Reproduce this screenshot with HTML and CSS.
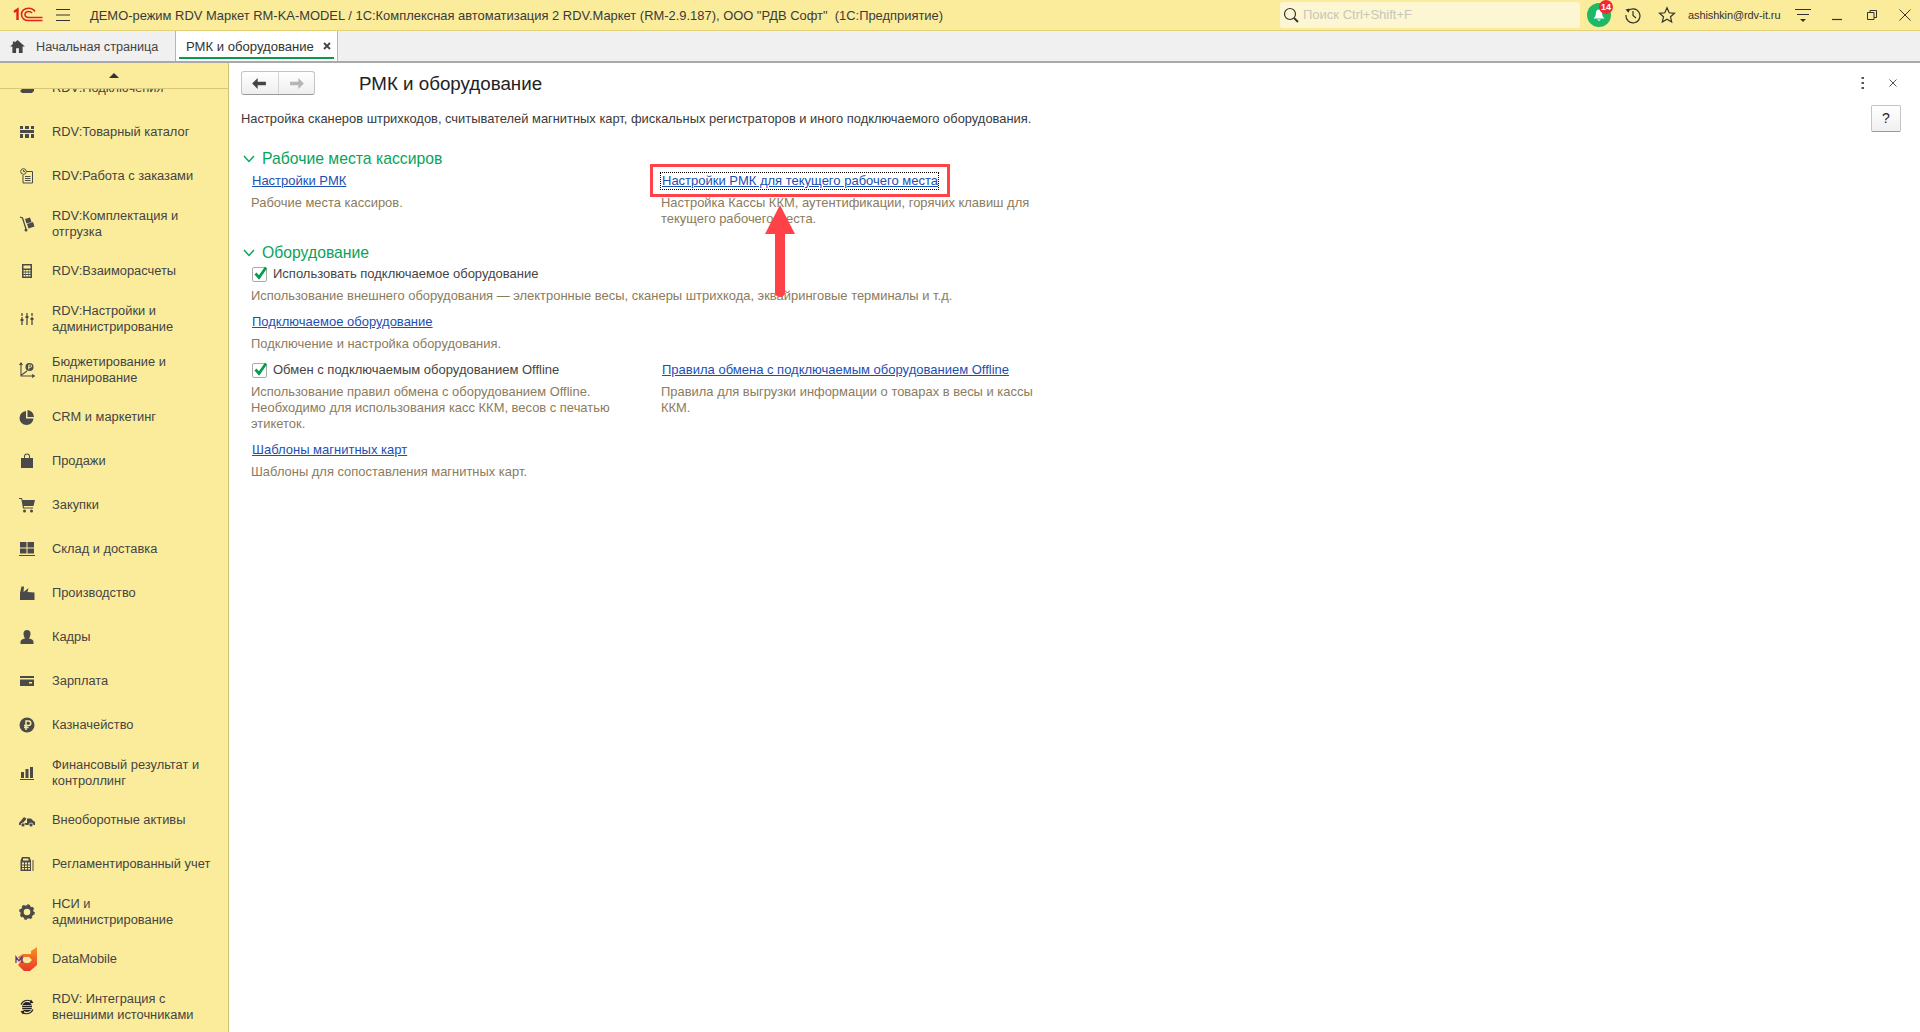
FILE: index.html
```html
<!DOCTYPE html>
<html lang="ru">
<head>
<meta charset="utf-8">
<title>РМК и оборудование</title>
<link rel="stylesheet" href="styles.css">
</head>
<body>
<header class="topbar">
  <svg class="logo" viewBox="0 0 30 16" width="30" height="16"><g fill="none" stroke="#e2231a"><path d="M1 5 L4.500 2.500 V13" stroke-width="2.400"/><path d="M22 4.500 C20.500 2 18 1.200 15.500 1.200 C11.500 1.200 8.500 3.800 8.500 7.500 C8.500 11 11.500 13.500 15.500 13.500 H29.500" stroke-width="1.600"/><path d="M19 6 C18.300 5 17 4.500 15.800 4.500 C13.500 4.500 12 5.800 12 7.500 C12 9.200 13.500 10.500 15.800 10.500 H29.500" stroke-width="1.600"/></g></svg>
  <svg class="burger" viewBox="0 0 14 12" width="14" height="12"><path d="M0 .5H14M0 6H14M0 11.500H14" stroke="#333" stroke-width="1"/></svg>
  <div class="apptitle">ДЕМО-режим RDV Маркет RM-KA-MODEL / 1С:Комплексная автоматизация 2 RDV.Маркет (RM-2.9.187), ООО "РДВ Софт"&nbsp; (1С:Предприятие)</div>
  <div class="search">
    <svg viewBox="0 0 16 16" width="16" height="16"><circle cx="7" cy="7" r="5.500" fill="none" stroke="#333" stroke-width="1.200"/><path d="M11 11l4 4" stroke="#333" stroke-width="1.800"/></svg>
    <span>Поиск Ctrl+Shift+F</span>
  </div>
  <div class="notify">
    <svg viewBox="0 0 16 16" width="16" height="16"><path d="M8 2.500C5.500 2.500 4.800 4.500 4.800 7C4.800 9 3.800 10 2.500 11.500H13.500C12.200 10 11.200 9 11.200 7C11.200 4.500 10.500 2.500 8 2.500ZM6 12.500H10L8 14Z" fill="#fff"/></svg>
    <span class="badge">14</span>
  </div>
  <svg class="ticon t-history" viewBox="0 0 18 18" width="18" height="18"><path d="M3.500 5.500A7 7 0 1 1 2 9" fill="none" stroke="#333" stroke-width="1.200"/><path d="M1.500 3.500L5.500 2.500 4.800 6.800Z" fill="#333"/><path d="M9 5V9.500L12 12" fill="none" stroke="#333" stroke-width="1.200"/></svg>
  <svg class="ticon t-star" viewBox="0 0 18 18" width="18" height="18"><path d="M9 1.800L11.200 6.800 16.500 7.300 12.500 10.800 13.700 16 9 13.300 4.300 16 5.500 10.800 1.500 7.300 6.800 6.800Z" fill="none" stroke="#333" stroke-width="1.200"/></svg>
  <div class="user">ashishkin@rdv-it.ru</div>
  <svg class="ticon t-menu" viewBox="0 0 16 16" width="16" height="16"><path d="M0 2.500H16M2 7.500H14" stroke="#333" stroke-width="1"/><path d="M5 12H11L8 15Z" fill="#333"/></svg>
  <svg class="ticon t-min" viewBox="0 0 10 12" width="10" height="12"><path d="M0 10.500H10" stroke="#333" stroke-width="1.200"/></svg>
  <svg class="ticon t-restore" viewBox="0 0 10 10" width="10" height="10"><path d="M.5 2.500H7V9.500H.5ZM3 2.500V.5H9.500V7.500H7" fill="none" stroke="#333"/></svg>
  <svg class="ticon t-close" viewBox="0 0 12 12" width="12" height="12"><path d="M.5 .5L11.500 11.500M11.500 .5L.5 11.500" stroke="#333" stroke-width="1"/></svg>
</header>

<nav class="tabs">
  <div class="tab tab-home">
    <svg viewBox="0 0 16 14" width="15" height="13"><path d="M8 0L16 7H13.500V14H9.500V9H6.500V14H2.500V7H0L3 4.400V1.500H5V2.600Z" fill="#444"/></svg>
    <span>Начальная страница</span>
  </div>
  <div class="tab tab-active">
    <span>РМК и оборудование</span>
    <svg viewBox="0 0 8 8" width="8" height="8"><path d="M1 1L7 7M7 1L1 7" stroke="#444" stroke-width="1.800"/></svg>
  </div>
</nav>

<div class="workspace">
  <aside class="sidebar">
    <div class="scrollup"><i class="tri"></i></div>
    <ul class="menu">
      <li class="item"><svg viewBox="0 0 16 16" width="16" height="16"><path d="M1 11L5 7H9L11 4H15V11L13 13H3Z" fill="#4a4a4a"/></svg><span>RDV:Подключения</span></li>
      <li class="item"><svg viewBox="0 0 16 16" width="16" height="16"><path d="M1 2H4V5H1ZM6 2H10V5H6ZM12 2H15V5H12ZM1 6H15V9H1ZM1 10H4V14H1ZM6 10H10V14H6ZM12 10H15V14H12Z" fill="#4a4a4a"/></svg><span>RDV:Товарный каталог</span></li>
      <li class="item"><svg viewBox="0 0 16 16" width="16" height="16"><g fill="none" stroke="#4a4a4a"><circle cx="4.500" cy="3.500" r="2.800"/><path d="M7.500 3.500H13.500V15H4V7M6 8.500H11.500M6 10.500H11.500M6 12.500H11.500M4.500 2V3.500H6"/></g></svg><span>RDV:Работа с заказами</span></li>
      <li class="item item-2"><svg viewBox="0 0 16 16" width="16" height="16"><path d="M1 1L3.500 2 7 13" fill="none" stroke="#4a4a4a" stroke-width="1.300"/><circle cx="7" cy="14" r="1.500" fill="#4a4a4a"/><path d="M6 3L11 1.500 12.500 6 7.500 7.500ZM8 8L14 6 15.500 10.500 9.500 12.500Z" fill="#4a4a4a"/></svg><span>RDV:Комплектация и<br>отгрузка</span></li>
      <li class="item"><svg viewBox="0 0 16 16" width="16" height="16"><path fill-rule="evenodd" d="M3 1H13V15H3ZM4.500 2.500V5.500H11.500V2.500ZM4.500 7V8.500H6.500V7ZM7 7V8.500H9V7ZM9.500 7V8.500H11.500V7ZM4.500 9.500V11H6.500V9.500ZM7 9.500V11H9V9.500ZM9.500 9.500V11H11.500V9.500ZM4.500 12V13.500H6.500V12ZM7 12V13.500H9V12ZM9.500 12V13.500H11.500V12Z" fill="#4a4a4a"/></svg><span>RDV:Взаиморасчеты</span></li>
      <li class="item item-2"><svg viewBox="0 0 16 16" width="16" height="16"><path d="M3 2V14M8 2V14M13 2V14" stroke="#4a4a4a" stroke-width="1.300" stroke-dasharray="3 1 9"/><path d="M1.500 8H4.500V10H1.500ZM6.500 5H9.500V7H6.500ZM11.500 7H14.500V9H11.500Z" fill="#4a4a4a"/></svg><span>RDV:Настройки и<br>администрирование</span></li>
      <li class="item item-2"><svg viewBox="0 0 16 16" width="16" height="16"><path d="M2 1V14H15M.5 3L2 1 3.500 3M13 12.500L15.500 14 13 15.500M2.500 13L8 9" fill="none" stroke="#4a4a4a" stroke-width="1.100"/><circle cx="10.500" cy="5" r="4" fill="#4a4a4a"/><path d="M9.800 7.500V3H11.500A1 1 0 0 1 11.500 5.300H9" fill="none" stroke="#fbec9c"/></svg><span>Бюджетирование и<br>планирование</span></li>
      <li class="item"><svg viewBox="0 0 16 16" width="16" height="16"><path d="M7 2A7 7 0 1 0 14.500 9.500H7ZM8.500 1A7 7 0 0 1 15 8H8.500Z" fill="#4a4a4a"/></svg><span>CRM и маркетинг</span></li>
      <li class="item"><svg viewBox="0 0 16 16" width="16" height="16"><path d="M2 5H5V3.500A3 3 0 0 1 11 3.500V5H14V15H2ZM6 5H10V3.500A2 2 0 0 0 6 3.500Z" fill="#4a4a4a"/></svg><span>Продажи</span></li>
      <li class="item"><svg viewBox="0 0 16 16" width="16" height="16"><path d="M0 1H3L3.500 3H16L14.500 9H4.800L5 10.500H14V11.500H4L2.300 2H0Z" fill="#4a4a4a"/><circle cx="5.500" cy="14" r="1.500" fill="#4a4a4a"/><circle cx="12.500" cy="14" r="1.500" fill="#4a4a4a"/></svg><span>Закупки</span></li>
      <li class="item"><svg viewBox="0 0 16 16" width="16" height="16"><path d="M1 1H7.500V6.500H1ZM8.500 1H15V6.500H8.500ZM1 7.500H7.500V12.500H1ZM8.500 7.500H15V12.500H8.500ZM0 14H16V15H0Z" fill="#4a4a4a"/></svg><span>Склад и доставка</span></li>
      <li class="item"><svg viewBox="0 0 16 16" width="16" height="16"><path d="M1 15V8L2.500 1.500H5L4.500 7 9.500 3 8.500 7 15.500 7.500V15Z" fill="#4a4a4a"/></svg><span>Производство</span></li>
      <li class="item"><svg viewBox="0 0 16 16" width="16" height="16"><path d="M8 1A3.500 3.500 0 0 1 11.500 4.500C11.500 7 10.500 8.500 10 9.500C13 10 14.500 11 14.500 13V15H1.500V13C1.500 11 3 10 6 9.500C5.500 8.500 4.500 7 4.500 4.500A3.500 3.500 0 0 1 8 1Z" fill="#4a4a4a"/></svg><span>Кадры</span></li>
      <li class="item"><svg viewBox="0 0 16 16" width="16" height="16"><path fill-rule="evenodd" d="M1 3H15V13H1ZM1 5V6.500H15V5ZM10 9V10.500H13V9Z" fill="#4a4a4a"/></svg><span>Зарплата</span></li>
      <li class="item"><svg viewBox="0 0 16 16" width="16" height="16"><circle cx="8" cy="8" r="7.500" fill="#4a4a4a"/><path d="M7 13V4H9.500A2 2 0 0 1 9.500 8.500H5M5 10.500H9.500" fill="none" stroke="#fbec9c" stroke-width="1.500"/></svg><span>Казначейство</span></li>
      <li class="item item-2"><svg viewBox="0 0 16 16" width="16" height="16"><path d="M2 7H5V13H2ZM6.500 4H9.500V13H6.500ZM11 2H14V13H11ZM1 14H15V15H1Z" fill="#4a4a4a"/></svg><span>Финансовый результат и<br>контроллинг</span></li>
      <li class="item"><svg viewBox="0 0 16 16" width="16" height="16"><path d="M0 11L5 5 7.500 6.800 4 11H8V6.500H12L15 9.500H16V13H0Z" fill="#4a4a4a"/><circle cx="4" cy="13" r="2" fill="#4a4a4a" stroke="#fbec9c" stroke-width=".8"/><circle cx="12" cy="13" r="2" fill="#4a4a4a" stroke="#fbec9c" stroke-width=".8"/></svg><span>Внеоборотные активы</span></li>
      <li class="item"><svg viewBox="0 0 16 16" width="16" height="16"><path fill-rule="evenodd" d="M1.500 4.500L3 1H10.500L12 4.500V15H1.500ZM4 2.500V4.500H9.500V2.500ZM3 6.500V8.500H5V6.500ZM6 6.500V8.500H8V6.500ZM9 6.500V8.500H11V6.500ZM3 9.500V11H5V9.500ZM6 9.500V11H8V9.500ZM9 9.500V11H11V9.500ZM3 12V13.500H5V12ZM6 12V13.500H8V12ZM9 12V13.500H11V12ZM13.500 4H14.500V15H13.500Z" fill="#4a4a4a"/></svg><span>Регламентированный учет</span></li>
      <li class="item item-2"><svg viewBox="0 0 16 16" width="16" height="16"><circle cx="8" cy="8" r="5" fill="none" stroke="#4a4a4a" stroke-width="3.400"/><circle cx="8" cy="8" r="6.600" fill="none" stroke="#4a4a4a" stroke-width="2.400" stroke-dasharray="2.600 2.580"/></svg><span>НСИ и<br>администрирование</span></li>
      <li class="item item-dm"><svg viewBox="0 0 24 26" width="24" height="26"><defs><linearGradient id="dm" x1="0" y1="0" x2="0" y2="1"><stop offset="0" stop-color="#f7941d"/><stop offset="1" stop-color="#e8392b"/></linearGradient></defs><path fill-rule="evenodd" d="M22 1V19L15 25H9L3 19 6 15 3 11 8 8H16V5ZM9 11L7 14 10 17H14L17 14 14 11Z" fill="url(#dm)"/><path d="M1 17V11L4 15 7 11V17" fill="none" stroke="#5b3a8c" stroke-width="1.300"/></svg><span>DataMobile</span></li>
      <li class="item item-2"><svg viewBox="0 0 16 16" width="16" height="16"><circle cx="8" cy="8" r="5" fill="#222"/><path d="M3.500 6.500H12.500M3 8.500H13M3.500 10.500H12.500" stroke="#fbec9c" stroke-width=".7"/><path d="M2 5.500A7 7 0 0 1 13 3M14 10.500A7 7 0 0 1 3 13" fill="none" stroke="#222" stroke-width="1.200"/><path d="M12 .5L14.500 4 10.500 4.300ZM4 15.500L1.500 12 5.500 11.700Z" fill="#222"/></svg><span>RDV: Интеграция с<br>внешними источниками</span></li>
    </ul>
  </aside>

  <main class="content">
    <div class="toolbar">
      <div class="navbtns">
        <div class="navbtn"><svg viewBox="0 0 16 12" width="15" height="11"><path d="M6 0V4H15V8H6V12L0 6Z" fill="#444"/></svg></div>
        <div class="navbtn"><svg viewBox="0 0 16 12" width="15" height="11"><path d="M10 0V4H1V8H10V12L16 6Z" fill="#b5b5b5"/></svg></div>
      </div>
      <h1 class="title">РМК и оборудование</h1>
      <div class="winctl">
        <svg viewBox="0 0 4 14" width="4" height="14"><path d="M.5 1H3V3H.5ZM.5 6H3V8H.5ZM.5 11H3V13H.5Z" fill="#555"/></svg>
        <svg viewBox="0 0 8 8" width="8" height="8"><path d="M.5 .5L7.500 7.500M7.500 .5L.5 7.500" stroke="#555" stroke-width="1"/></svg>
      </div>
    </div>
    <div class="descrow">
      <p class="lead">Настройка сканеров штрихкодов, считывателей магнитных карт, фискальных регистраторов и иного подключаемого оборудования.</p>
      <div class="help">?</div>
    </div>

    <section class="group group-first">
      <h2 class="grouphead"><svg viewBox="0 0 12 8" width="12" height="8"><path d="M1 1L6 6.500 11 1" fill="none" stroke="#0aa35a" stroke-width="1.400"/></svg>Рабочие места кассиров</h2>
      <div class="cols">
        <div class="block block-tight"><a class="link" href="#">Настройки РМК</a><p class="hint">Рабочие места кассиров.</p></div>
        <div class="block block-tight"><a class="link link-focus" href="#">Настройки РМК для текущего рабочего места</a><p class="hint">Настройка Кассы ККМ, аутентификации, горячих клавиш для<br>текущего рабочего места.</p></div>
      </div>
    </section>

    <section class="group group-second">
      <h2 class="grouphead"><svg viewBox="0 0 12 8" width="12" height="8"><path d="M1 1L6 6.500 11 1" fill="none" stroke="#0aa35a" stroke-width="1.400"/></svg>Оборудование</h2>
      <div class="block block-tight">
        <label class="check"><svg viewBox="0 0 16 16" width="16" height="16"><rect x=".5" y="1.500" width="14" height="14" rx="1.500" fill="#fff" stroke="#aaa"/><path d="M3.500 7.500L7 11.500 14 1.500" fill="none" stroke="#0a9a4e" stroke-width="2.700"/></svg>Использовать подключаемое оборудование</label>
        <p class="hint">Использование внешнего оборудования — электронные весы, сканеры штрихкода, эквайринговые терминалы и т.д.</p>
      </div>
      <div class="block"><a class="link" href="#">Подключаемое оборудование</a><p class="hint">Подключение и настройка оборудования.</p></div>
      <div class="cols block">
        <div>
          <label class="check"><svg viewBox="0 0 16 16" width="16" height="16"><rect x=".5" y="1.500" width="14" height="14" rx="1.500" fill="#fff" stroke="#aaa"/><path d="M3.500 7.500L7 11.500 14 1.500" fill="none" stroke="#0a9a4e" stroke-width="2.700"/></svg>Обмен с подключаемым оборудованием Offline</label>
          <p class="hint">Использование правил обмена с оборудованием Offline.<br>Необходимо для использования касс ККМ, весов с печатью<br>этикеток.</p>
        </div>
        <div><a class="link" href="#">Правила обмена с подключаемым оборудованием Offline</a><p class="hint">Правила для выгрузки информации о товарах в весы и кассы<br>ККМ.</p></div>
      </div>
      <div class="block"><a class="link" href="#">Шаблоны магнитных карт</a><p class="hint">Шаблоны для сопоставления магнитных карт.</p></div>
    </section>

    <div class="callout-box"></div>
    <svg class="callout-arrow" viewBox="0 0 30 92" width="30" height="92"><path d="M15 0L30 29H20V88A5 4 0 0 1 10 88V29H0Z" fill="#ff4248"/></svg>
  </main>
</div>
</body>
</html>
```

FILE: styles.css
```css
* { box-sizing: border-box; }
html, body { margin: 0; height: 100%; }
body {
  display: flex;
  flex-direction: column;
  height: 100vh;
  overflow: hidden;
  background: #fff;
  color: #333;
  font: 13px/16px "Liberation Sans", Arial, sans-serif;
}
svg { display: block; flex: none; }

/* top bar */
.topbar {
  display: flex;
  align-items: center;
  height: 31px;
  flex: none;
  padding-left: 13px;
  background: #fbec9c;
  border-bottom: 1px solid #e3d277;
}
.burger { margin-left: 13px; }
.apptitle { margin: 2px 0 0 20px; width: 1190px; white-space: nowrap; color: #3a3a3a; font-size: 12.93px; }
.search {
  display: flex;
  align-items: center;
  gap: 4px;
  width: 300px;
  height: 26px;
  padding-left: 3px;
  background: #fdf6d2;
  border-radius: 3px;
  color: #c8c6bb;
  font-size: 13px;
}
.notify {
  position: relative;
  display: flex;
  align-items: center;
  justify-content: center;
  width: 24px;
  height: 24px;
  margin-left: 7px;
  border-radius: 50%;
  background: #1fb866;
}
.badge {
  position: absolute;
  top: -3px;
  right: -2px;
  width: 14px;
  height: 14px;
  border-radius: 50%;
  background: #ee2a34;
  color: #fff;
  font-size: 9px;
  font-weight: 700;
  line-height: 14px;
  text-align: center;
}
.t-history { margin-left: 13px; }
.t-star { margin-left: 16px; }
.user { margin-left: 12px; width: 96px; font-size: 11px; white-space: nowrap; color: #333; letter-spacing: -.1px; }
.t-menu { margin-left: 11px; }
.t-min { margin-left: 21px; }
.t-restore { margin-left: 25px; }
.t-close { margin-left: 22px; }

/* tabs */
.tabs {
  display: flex;
  height: 32px;
  flex: none;
  background: #f0f0f0;
  border-bottom: 2px solid #a9a9a9;
}
.tab { display: flex; align-items: center; height: 30px; color: #444; }
.tab span { padding-top: 2px; }
.tab-home {
  width: 176px;
  padding-left: 10px;
  gap: 11px;
  font-size: 12.65px;
  border-right: 1px solid #b5b5b5;
}
.tab-active {
  position: relative;
  width: 162px;
  padding-left: 10px;
  gap: 9px;
  background: #fff;
  border-right: 1px solid #b5b5b5;
  color: #333;
  font-size: 13.1px;
}
.tab-active::after {
  content: "";
  position: absolute;
  left: 3px;
  right: 3px;
  bottom: 2px;
  height: 2px;
  background: #0a9a4e;
}

/* sidebar */
.workspace { display: flex; flex: 1; min-height: 0; }
.sidebar {
  width: 229px;
  flex: none;
  overflow: hidden;
  background: #fbec9c;
  border-right: 1px solid #cfc07a;
  font-size: 12.85px;
}
.scrollup {
  position: relative;
  z-index: 1;
  display: flex;
  align-items: center;
  justify-content: center;
  height: 26px;
  background: #fbec9c;
  border-bottom: 1px solid #d6c67a;
}
.tri { width: 0; height: 0; border: 5px solid transparent; border-top: 0; border-bottom: 5px solid #333; }
.menu { list-style: none; margin: -23px 0 0; padding: 0; }
.item {
  display: flex;
  align-items: center;
  height: 44px;
  padding-left: 19px;
  gap: 17px;
  color: #444;
  white-space: nowrap;
}
.item-2 { height: 51px; }
.item-dm { padding-left: 15px; gap: 13px; }

/* main */
.content { position: relative; flex: 1; padding: 8px 18px 0 12px; min-width: 0; }
.toolbar { display: flex; align-items: center; height: 24px; }
.navbtns {
  display: flex;
  width: 74px;
  height: 24px;
  border: 1px solid #c4c4c4;
  border-bottom-color: #9a9a9a;
  border-radius: 3px;
  background: linear-gradient(#fff, #eee);
}
.navbtn { display: flex; align-items: center; justify-content: center; flex: 1; }
.navbtn + .navbtn { border-left: 1px solid #d5d5d5; }
.title { margin: 2px 0 0 44px; font-size: 18.75px; line-height: 24px; font-weight: 400; color: #222; }
.winctl { display: flex; align-items: center; gap: 24px; margin-left: auto; padding-right: 5px; }
.descrow { display: flex; justify-content: space-between; align-items: center; margin-top: 10px; height: 27px; }
.lead { margin: 0; color: #3a3a3a; font-size: 12.9px; }
.help {
  width: 30px;
  height: 27px;
  border: 1px solid #c4c4c4;
  border-bottom-color: #9a9a9a;
  border-radius: 2px;
  background: linear-gradient(#fff, #f0f0f0);
  text-align: center;
  font-size: 14px;
  line-height: 25px;
  color: #222;
  margin-right: 1px;
}
.group-first { margin-top: 17px; }
.group-second { margin-top: 16px; }
.grouphead {
  display: flex;
  align-items: center;
  gap: 7px;
  margin: 0;
  padding-left: 2px;
  font-size: 15.75px;
  line-height: 20px;
  font-weight: 400;
  color: #0aa35a;
}
.cols { display: grid; grid-template-columns: 410px 420px; margin-left: 10px; }
.block { margin-top: 10px; margin-left: 10px; }
.block-tight { margin-top: 3px; }
.cols > .block { margin-left: 0; }
.cols.block { margin-left: 10px; }
.group-first .cols { margin-top: 4px; }
.group-first .block { margin-top: 0; }
.link { display: inline-block; color: #1c4fb4; text-decoration: underline; padding-left: 1px; }
.link-focus { outline: 1px dotted #000; outline-offset: 0; }
.hint { margin: 6px 0 0; color: #8c7b5c; font-size: 12.94px; }
.check { display: flex; align-items: center; gap: 5px; padding-left: 1px; color: #444; }
.callout-box {
  position: absolute;
  left: 421px;
  top: 101px;
  width: 300px;
  height: 33px;
  border: 3px solid #ff4248;
}
.callout-arrow { position: absolute; left: 536px; top: 142px; }
```
